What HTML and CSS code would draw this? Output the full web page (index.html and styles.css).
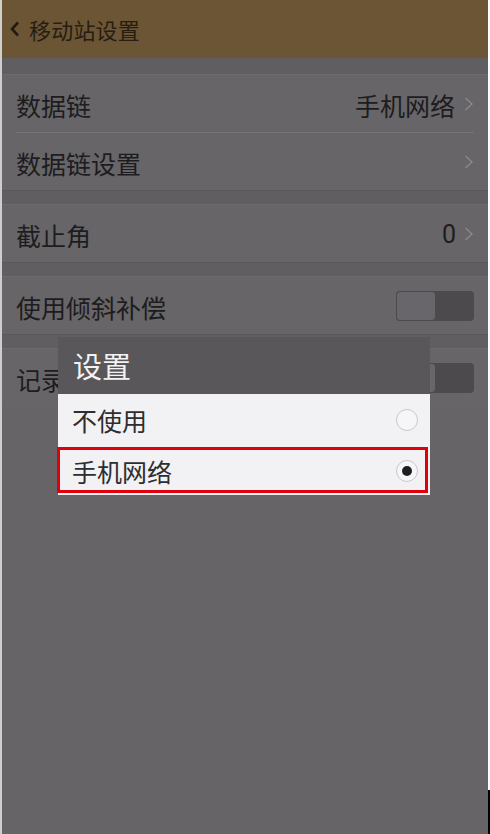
FILE: index.html
```html
<!DOCTYPE html>
<html lang="zh-CN">
<head>
<meta charset="utf-8">
<title>移动站设置</title>
<link rel="stylesheet" href="styles.css">
</head>
<body>
<div class="edge-left"></div>
<div class="screen">
  <header class="topbar">
    <svg class="back" width="10" height="16" viewBox="0 0 10 16"><polyline points="8,1.5 2,8 8,14.5" fill="none" stroke="#231a10" stroke-width="2.6" stroke-linejoin="miter"/></svg>
    <span class="title">移动站设置</span>
  </header>

  <div class="gap gap-first"></div>
  <div class="group">
    <div class="row">
      <span class="label">数据链</span>
      <span class="value">手机网络</span>
      <svg class="chev" width="10" height="16" viewBox="0 0 10 16"><polyline points="1.5,2 8,8 1.5,14" fill="none" stroke="#8c8a8d" stroke-width="1.3"/></svg>
    </div>
    <div class="row">
      <span class="label">数据链设置</span>
      <span class="value"></span>
      <svg class="chev" width="10" height="16" viewBox="0 0 10 16"><polyline points="1.5,2 8,8 1.5,14" fill="none" stroke="#8c8a8d" stroke-width="1.3"/></svg>
    </div>
  </div>

  <div class="gap"></div>
  <div class="group">
    <div class="row">
      <span class="label">截止角</span>
      <span class="value num">0</span>
      <svg class="chev" width="10" height="16" viewBox="0 0 10 16"><polyline points="1.5,2 8,8 1.5,14" fill="none" stroke="#8c8a8d" stroke-width="1.3"/></svg>
    </div>
  </div>

  <div class="gap"></div>
  <div class="group">
    <div class="row">
      <span class="label">使用倾斜补偿</span>
      <span class="toggle"><span class="knob"></span></span>
    </div>
  </div>

  <div class="gap"></div>
  <div class="group">
    <div class="row">
      <span class="label short">记录</span>
      <span class="toggle"><span class="knob"></span></span>
    </div>
  </div>

  <div class="dialog">
    <div class="dialog-title">设置</div>
    <div class="dialog-list">
      <div class="option">
        <span class="opt-label">不使用</span>
        <span class="radio"></span>
      </div>
      <div class="option selected">
        <span class="opt-label">手机网络</span>
        <span class="radio on"></span>
      </div>
    </div>
  </div>
</div>
<div class="edge-right">
  <div class="edge-fill"></div>
  <div class="edge-bar"></div>
</div>
</body>
</html>
```

FILE: styles.css
```css
html, body {
  margin: 0;
  padding: 0;
}
body {
  width: 490px;
  height: 834px;
  display: flex;
  background: #ffffff;
  font-family: "Noto Sans CJK SC", "Noto Sans", sans-serif;
  overflow: hidden;
}
.edge-left {
  width: 2px;
  background: #cfcecf;
}
.edge-right {
  width: 2px;
  display: flex;
  flex-direction: column;
}
.edge-fill {
  flex: 1;
  background: #ffffff;
}
.edge-bar {
  height: 44px;
  background: #000000;
}
.screen {
  position: relative;
  width: 486px;
  height: 834px;
  background: #666467;
  display: flex;
  flex-direction: column;
}
.topbar {
  height: 58px;
  background: #6b5535;
  display: flex;
  align-items: center;
  padding-left: 8px;
  gap: 9px;
  box-sizing: border-box;
}
.title {
  font-size: 22px;
  color: #271d12;
  letter-spacing: 0.2px;
}
.gap {
  height: 13px;
  background: #605e61;
  border-top: 1px solid #5a585b;
  border-bottom: 1px solid #6d6b6e;
}
.gap-first {
  height: 16px;
  border-top: none;
}
.group {
  background: #676568;
}
.row {
  height: 57px;
  display: flex;
  align-items: center;
  padding: 2px 14px 0;
  box-sizing: border-box;
  position: relative;
}
.row + .row::before {
  content: "";
  position: absolute;
  top: -1px;
  left: 14px;
  right: 14px;
  height: 1px;
  background: #767477;
}
.row + .row {
  margin-top: 1px;
}
.label {
  font-size: 25px;
  color: #1d1c1e;
  flex: 1;
  white-space: nowrap;
}
.value {
  font-size: 25px;
  color: #1d1c1e;
  margin-right: 9px;
}
.value.num {
  font-family: "Roboto", "Noto Sans", sans-serif;
  font-size: 25px;
  margin-right: 8px;
}
.chev {
  display: block;
  margin-top: -2px;
}
.toggle {
  width: 78px;
  height: 30px;
  margin-top: -2px;
  border-radius: 4px;
  background: #4c4a4d;
  display: flex;
  box-sizing: border-box;
}
.knob {
  width: 40px;
  height: 30px;
  box-sizing: border-box;
  border: 1px solid #4c4a4d;
  border-radius: 4px;
  background: #68666a;
}
.dialog {
  position: absolute;
  top: 337px;
  left: 56px;
  width: 372px;
}
.dialog-title {
  height: 57px;
  background: #59575a;
  color: #f2f2f2;
  font-size: 29px;
  display: flex;
  align-items: center;
  padding-left: 15px;
  box-sizing: border-box;
  padding-bottom: 2px;
}
.dialog-list {
  background: #f2f1f4;
}
.option {
  height: 51px;
  display: flex;
  align-items: center;
  padding: 1px 12px 0 14px;
  box-sizing: border-box;
  position: relative;
}
.option + .option {
  height: 50px;
}
.opt-label {
  flex: 1;
  font-size: 25px;
  color: #2e2d30;
}
.radio {
  width: 22px;
  height: 22px;
  border-radius: 50%;
  border: 1px solid #c9c8cb;
  box-sizing: border-box;
  background: #f6f5f8;
  display: flex;
  align-items: center;
  justify-content: center;
}
.radio.on::after {
  content: "";
  width: 10px;
  height: 10px;
  border-radius: 50%;
  background: #1f1e21;
}
.option.selected::after {
  content: "";
  position: absolute;
  left: -1px;
  right: 2px;
  top: 2px;
  bottom: 2px;
  border: 3px solid #e0000c;
}
```
